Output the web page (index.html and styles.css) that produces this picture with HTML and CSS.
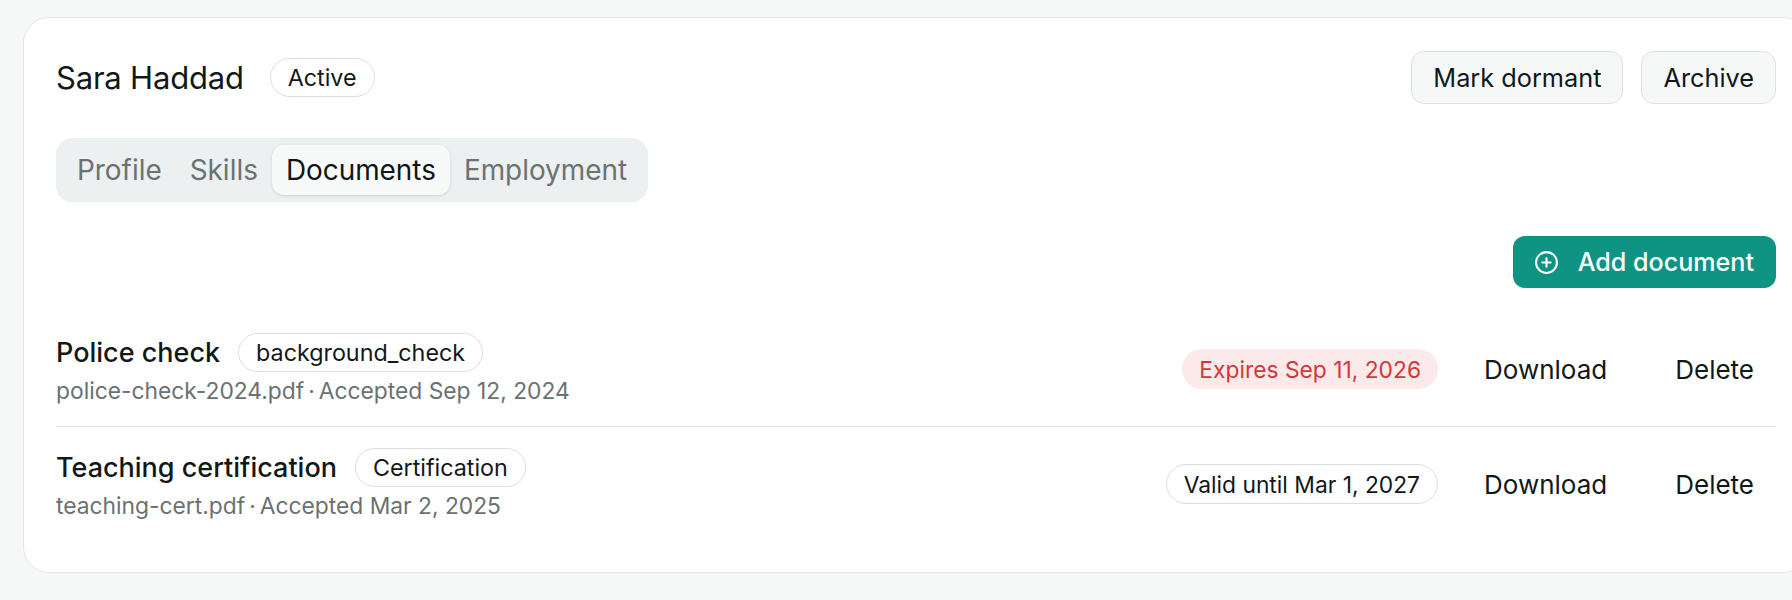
FILE: index.html
```html
<!DOCTYPE html>
<html lang="en">
<head>
<meta charset="utf-8">
<title>Sara Haddad — Documents</title>
<link rel="stylesheet" href="styles.css">
</head>
<body>
<main class="page">
  <section class="card">
    <header class="card-header">
      <div class="identity">
        <h1 class="name">Sara Haddad</h1>
        <span class="badge">Active</span>
      </div>
      <div class="header-actions">
        <button class="btn btn-outline">Mark dormant</button>
        <button class="btn btn-outline">Archive</button>
      </div>
    </header>

    <nav class="tabs">
      <span class="tab">Profile</span>
      <span class="tab">Skills</span>
      <span class="tab tab-active">Documents</span>
      <span class="tab">Employment</span>
    </nav>

    <div class="toolbar">
      <button class="btn btn-primary">
        <svg class="icon" viewBox="0 0 24 24" width="25" height="25" fill="none" stroke="currentColor" stroke-width="2" stroke-linecap="round" stroke-linejoin="round"><circle cx="12" cy="12" r="10"/><path d="M12 8v8M8 12h8"/></svg>
        <span>Add document</span>
      </button>
    </div>

    <ul class="doc-list">
      <li class="doc-row">
        <div class="doc-info">
          <div class="doc-title-line">
            <span class="doc-title">Police check</span>
            <span class="badge">background_check</span>
          </div>
          <div class="doc-meta">police-check-2024.pdf<span class="sep">·</span>Accepted Sep 12, 2024</div>
        </div>
        <div class="doc-actions">
          <span class="pill pill-danger">Expires Sep 11, 2026</span>
          <button class="btn-link">Download</button>
          <button class="btn-link">Delete</button>
        </div>
      </li>
      <li class="doc-row">
        <div class="doc-info">
          <div class="doc-title-line">
            <span class="doc-title">Teaching certification</span>
            <span class="badge">Certification</span>
          </div>
          <div class="doc-meta">teaching-cert.pdf<span class="sep">·</span>Accepted Mar 2, 2025</div>
        </div>
        <div class="doc-actions">
          <span class="pill pill-neutral">Valid until Mar 1, 2027</span>
          <button class="btn-link">Download</button>
          <button class="btn-link">Delete</button>
        </div>
      </li>
    </ul>
  </section>
</main>
</body>
</html>
```

FILE: styles.css
```css
* { box-sizing: border-box; }

html, body {
  margin: 0;
  padding: 0;
  overflow: hidden;
  background: #f6f8f8;
}

body {
  font-family: Inter, "Noto Sans", "Liberation Sans", sans-serif;
  color: #121a1a;
}

.page {
  padding: 17px 0 40px 23px;
}

.card {
  width: 1786px;
  background: #ffffff;
  border: 1px solid #e1e5e5;
  border-radius: 26px;
  padding: 33px 32px 31px 32px;
}

.card-header {
  display: flex;
  align-items: center;
  justify-content: space-between;
  height: 53px;
}

.identity {
  display: flex;
  align-items: center;
  gap: 26px;
}

.name {
  margin: 0;
  font-size: 31px;
  font-weight: 400;
  letter-spacing: -0.2px;
  color: #111818;
}

.header-actions {
  display: flex;
  gap: 18px;
}

.btn {
  font-family: inherit;
  font-size: 25.3px;
  font-weight: 400;
  cursor: pointer;
}

.btn-outline {
  height: 53px;
  padding: 0 21px;
  background: #f6f8f8;
  border: 1.5px solid #dde2e2;
  border-radius: 13px;
  color: #111818;
}

.badge {
  display: inline-flex;
  align-items: center;
  height: 39px;
  padding: 0 17px;
  border: 1.5px solid #d9dfdf;
  border-radius: 999px;
  background: #ffffff;
  font-size: 23.3px;
  font-weight: 400;
  color: #111818;
}

.tabs {
  display: inline-flex;
  margin-top: 34px;
  padding: 7px;
  background: #ecf0f0;
  border-radius: 16px;
}

.tab {
  display: inline-flex;
  align-items: center;
  height: 50px;
  padding: 0 14px;
  font-size: 27.9px;
  font-weight: 400;
  color: #6a7373;
  border-radius: 12px;
}

.tab-active {
  background: #f8fafa;
  color: #0f1616;
  box-shadow: 0 1px 3px rgba(20, 40, 40, 0.14);
}

.toolbar {
  display: flex;
  justify-content: flex-end;
  margin-top: 34px;
}

.btn-primary {
  display: inline-flex;
  align-items: center;
  gap: 19px;
  height: 52px;
  padding: 0 22px 0 21px;
  border: none;
  border-radius: 12px;
  background: #0f9484;
  color: #ffffff;
  font-size: 25.1px;
  font-weight: 500;
}

.icon {
  display: block;
  flex: none;
}

.doc-list {
  list-style: none;
  margin: 24px 0 0 0;
  padding: 0;
}

.doc-row {
  display: flex;
  align-items: center;
  justify-content: space-between;
  padding: 20px 0;
}

.doc-row + .doc-row {
  border-top: 1.5px solid #dde1e1;
}

.doc-info {
  display: flex;
  flex-direction: column;
}

.doc-title-line {
  display: flex;
  align-items: center;
  gap: 18px;
  height: 40px;
}

.doc-title {
  font-size: 27px;
  font-weight: 500;
  color: #111818;
}

.doc-meta {
  margin-top: 3px;
  line-height: 31px;
  font-size: 22.8px;
  color: #6a7171;
}

.sep {
  margin: 0 4px;
}

.doc-actions {
  display: flex;
  align-items: center;
  gap: 24px;
}

.pill {
  display: inline-flex;
  align-items: center;
  height: 40px;
  padding: 0 17px;
  border-radius: 999px;
  font-size: 22.8px;
  font-weight: 400;
}

.pill-danger {
  background: #fce9e9;
  color: #d2383a;
}

.pill-neutral {
  border: 1.5px solid #d9dfdf;
  background: #ffffff;
  color: #111818;
}

.btn-link {
  height: 48px;
  padding: 0 22px;
  border: none;
  background: transparent;
  font-family: inherit;
  font-size: 26px;
  font-weight: 400;
  color: #111818;
  cursor: pointer;
}
```
